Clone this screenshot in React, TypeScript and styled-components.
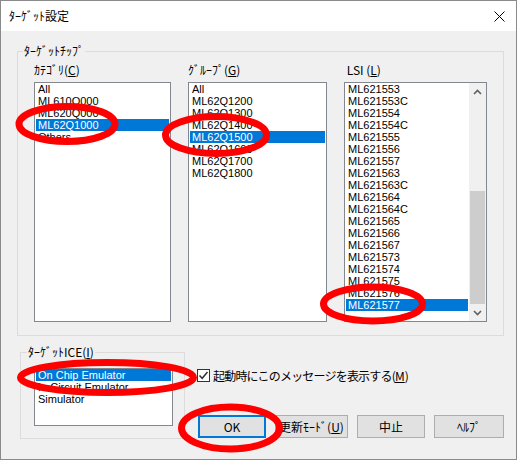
import React from 'react';
import styled, { createGlobalStyle } from 'styled-components';

const GlobalStyle = createGlobalStyle`
  html, body {
    margin: 0;
    padding: 0;
    background: #f0f0f0;
  }
  * {
    box-sizing: border-box;
  }
`;

const Window = styled.div`
  position: relative;
  width: 517px;
  height: 460px;
  display: flex;
  flex-direction: column;
  border: 1px solid #8a8a8a;
  background: #f0f0f0;
  font-family: "Liberation Sans", "Noto Sans CJK JP", sans-serif;
  font-size: 12px;
  color: #000;
  overflow: hidden;
`;

const TitleBar = styled.div`
  height: 30px;
  flex-shrink: 0;
  background: #fff;
  display: flex;
  align-items: center;
  justify-content: space-between;
  padding: 0 11px 0 8px;
`;

const TitleText = styled.span`
  font-family: "Noto Sans CJK JP", sans-serif;
  font-size: 12px;
  line-height: 14px;
`;

const Body = styled.div`
  display: flex;
  flex-direction: column;
  padding: 20px 0 0 16px;
`;

const Group = styled.div<{ $w: number; $h: number; $pad: string }>`
  position: relative;
  width: ${(p) => p.$w}px;
  height: ${(p) => p.$h}px;
  border: 1px solid #dcdcdc;
  padding: ${(p) => p.$pad};
`;

const Legend = styled.span<{ $left: number }>`
  position: absolute;
  top: -8px;
  left: ${(p) => p.$left}px;
  padding: 0 1px;
  background: #f0f0f0;
  font-family: "Noto Sans CJK JP", sans-serif;
  line-height: 14px;
  white-space: nowrap;
`;

const Columns = styled.div`
  display: flex;
  gap: 17px;
`;

const Column = styled.div<{ $w: number }>`
  width: ${(p) => p.$w}px;
  display: flex;
  flex-direction: column;
`;

const Label = styled.div`
  height: 14px;
  line-height: 14px;
  margin-bottom: 5px;
  font-family: "Noto Sans CJK JP", "Liberation Sans", sans-serif;
  white-space: nowrap;
`;

const ListBox = styled.div<{ $h: number }>`
  height: ${(p) => p.$h}px;
  border: 1px solid #828790;
  background: #fff;
  display: flex;
  overflow: hidden;
`;

const Items = styled.div`
  flex: 1;
  padding: 0 1px;
  display: flex;
  flex-direction: column;
`;

const Item = styled.div<{ $sel?: boolean }>`
  height: 12px;
  line-height: 12px;
  padding-left: 2px;
  font-family: "Liberation Sans", sans-serif;
  font-size: 11px;
  white-space: nowrap;
  background: ${(p) => (p.$sel ? '#0078d7' : 'transparent')};
  color: ${(p) => (p.$sel ? '#fff' : '#000')};
`;

const ScrollBar = styled.div`
  width: 17px;
  background: #f0f0f0;
  display: flex;
  flex-direction: column;
`;

const ScrollArrow = styled.div`
  height: 17px;
  display: flex;
  align-items: center;
  justify-content: center;
`;

const Track = styled.div`
  flex: 1;
  display: flex;
  flex-direction: column;
  justify-content: flex-end;
  padding: 0 1px;
`;

const Thumb = styled.div`
  height: 113px;
  background: #cdcdcd;
`;

const Lower = styled.div`
  display: flex;
  margin-top: 16px;
  padding-left: 3px;
`;

const RightPanel = styled.div`
  display: flex;
  flex-direction: column;
  margin-left: 12px;
  padding-top: 17px;
`;

const CheckRow = styled.div`
  display: flex;
  align-items: center;
  gap: 3px;
  height: 13px;
`;

const CheckBox = styled.div`
  width: 13px;
  height: 13px;
  border: 1px solid #333;
  background: #fff;
  display: flex;
  align-items: center;
  justify-content: center;
`;

const CheckText = styled.span`
  font-family: "Noto Sans CJK JP", sans-serif;
  font-size: 12px;
  letter-spacing: -0.8px;
  line-height: 14px;
  white-space: nowrap;

  u {
    letter-spacing: 0;
  }
`;

const ButtonRow = styled.div`
  display: flex;
  gap: 9px;
  margin-top: 33px;
  margin-left: 1px;
`;

const Button = styled.div<{ $w: number; $default?: boolean }>`
  width: ${(p) => p.$w}px;
  height: 23px;
  background: #e1e1e1;
  border: ${(p) => (p.$default ? '2px solid #0078d7' : '1px solid #adadad')};
  display: flex;
  align-items: center;
  justify-content: center;
  font-family: "Noto Sans CJK JP", "Liberation Sans", sans-serif;
  font-size: 12px;
  white-space: nowrap;
`;

const Marks = styled.svg`
  position: absolute;
  top: -1px;
  left: -1px;
  pointer-events: none;
`;

const Chevron = ({ up }: { up?: boolean }) => (
  <svg width="9" height="6" viewBox="0 0 9 6">
    <polyline
      points={up ? '1,5 4.5,1.5 8,5' : '1,1 4.5,4.5 8,1'}
      fill="none"
      stroke="#606060"
      strokeWidth="1.6"
    />
  </svg>
);

const categories = ['All', 'ML610Q000', 'ML620Q000', 'ML62Q1000', 'Others'];
const groups = ['All', 'ML62Q1200', 'ML62Q1300', 'ML62Q1400', 'ML62Q1500', 'ML62Q1600', 'ML62Q1700', 'ML62Q1800'];
const lsis = [
  'ML621553', 'ML621553C', 'ML621554', 'ML621554C', 'ML621555', 'ML621556', 'ML621557',
  'ML621563', 'ML621563C', 'ML621564', 'ML621564C', 'ML621565', 'ML621566', 'ML621567',
  'ML621573', 'ML621574', 'ML621575', 'ML621576', 'ML621577',
];
const ices = ['On Chip Emulator', 'In Circuit Emulator', 'Simulator'];

const ellipses = [
  { cx: 67, cy: 124, rx: 48, ry: 17.5 },
  { cx: 216, cy: 135, rx: 50.5, ry: 18.5 },
  { cx: 373, cy: 304, rx: 49.5, ry: 17 },
  { cx: 107, cy: 377.5, rx: 86.5, ry: 15 },
  { cx: 230.5, cy: 428, rx: 49, ry: 21 },
];

export default function App() {
  return (
    <>
      <GlobalStyle />
      <Window>
        <TitleBar>
          <TitleText>ﾀｰｹﾞｯﾄ設定</TitleText>
          <svg width="11" height="11" viewBox="0 0 11 11">
            <path d="M0.5 0.5 L10.5 10.5 M10.5 0.5 L0.5 10.5" stroke="#000" strokeWidth="1" />
          </svg>
        </TitleBar>
        <Body>
          <Group $w={487} $h={285} $pad="11px 15px 0 16px">
            <Legend $left={5}>ﾀｰｹﾞｯﾄﾁｯﾌﾟ</Legend>
            <Columns>
              <Column $w={137}>
                <Label>ｶﾃｺﾞﾘ(<u>C</u>)</Label>
                <ListBox $h={240}>
                  <Items>
                    {categories.map((c) => (
                      <Item key={c} $sel={c === 'ML62Q1000'}>{c}</Item>
                    ))}
                  </Items>
                </ListBox>
              </Column>
              <Column $w={139}>
                <Label>ｸﾞﾙｰﾌﾟ(<u>G</u>)</Label>
                <ListBox $h={240}>
                  <Items>
                    {groups.map((g) => (
                      <Item key={g} $sel={g === 'ML62Q1500'}>{g}</Item>
                    ))}
                  </Items>
                </ListBox>
              </Column>
              <Column $w={143}>
                <Label>&nbsp;LSI (<u>L</u>)</Label>
                <ListBox $h={240}>
                  <Items>
                    {lsis.map((l) => (
                      <Item key={l} $sel={l === 'ML621577'}>{l}</Item>
                    ))}
                  </Items>
                  <ScrollBar>
                    <ScrollArrow>
                      <Chevron up />
                    </ScrollArrow>
                    <Track>
                      <Thumb />
                    </Track>
                    <ScrollArrow>
                      <Chevron />
                    </ScrollArrow>
                  </ScrollBar>
                </ListBox>
              </Column>
            </Columns>
          </Group>
          <Lower>
            <Group $w={165} $h={87} $pad="15px 0 0 13px">
              <Legend $left={6}>ﾀｰｹﾞｯﾄICE(<u>I</u>)</Legend>
              <Column $w={139}>
                <ListBox $h={58}>
                  <Items>
                    {ices.map((i) => (
                      <Item key={i} $sel={i === 'On Chip Emulator'}>{i}</Item>
                    ))}
                  </Items>
                </ListBox>
              </Column>
            </Group>
            <RightPanel>
              <CheckRow>
                <CheckBox>
                  <svg width="11" height="11" viewBox="0 0 11 11">
                    <polyline points="1.5,5.5 4.2,8.3 9.5,2" fill="none" stroke="#333" strokeWidth="1.5" />
                  </svg>
                </CheckBox>
                <CheckText>起動時にこのメッセージを表示する(<u>M</u>)</CheckText>
              </CheckRow>
              <ButtonRow>
                <Button $w={68} $default>OK</Button>
                <Button $w={73}>更新ﾓｰﾄﾞ(<u>U</u>)</Button>
                <Button $w={68}>中止</Button>
                <Button $w={70}>ﾍﾙﾌﾟ</Button>
              </ButtonRow>
            </RightPanel>
          </Lower>
        </Body>
        <Marks width="517" height="460" viewBox="0 0 517 460">
          {ellipses.map((e, i) => (
            <ellipse key={i} cx={e.cx} cy={e.cy} rx={e.rx} ry={e.ry} fill="none" stroke="#ff0000" strokeWidth="7" />
          ))}
        </Marks>
      </Window>
    </>
  );
}
